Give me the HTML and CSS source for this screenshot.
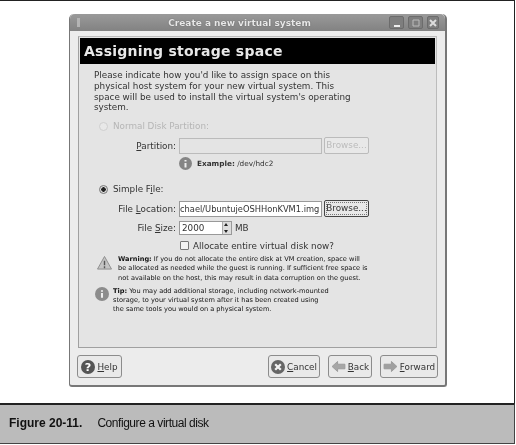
FILE: index.html
```html
<!DOCTYPE html>
<html lang="en">
<head>
    <meta charset="UTF-8">
    <meta name="viewport" content="width=device-width, initial-scale=1.0">
    <title>Create a new virtual system</title>
    <link rel="stylesheet" href="styles.css">
</head>
<body>

<div class="figure">
    <div class="window">
        <div class="titlebar">
            <span class="grip"></span>
            <span class="title">Create a new virtual system</span>
            <span class="wm-buttons">
                <span class="wm-btn"><svg width="10" height="10" viewBox="0 0 10 10"><path d="M2 8h6" stroke="#eee" stroke-width="2"/></svg></span>
                <span class="wm-btn"><svg width="10" height="10" viewBox="0 0 10 10"><path d="M2 2h6v6H2z" fill="none" stroke="#bbb" stroke-width="1"/></svg></span>
                <span class="wm-btn wm-close"><svg width="10" height="10" viewBox="0 0 10 10"><path d="M2 2l6 6M8 2l-6 6" stroke="#ddd" stroke-width="2"/></svg></span>
            </span>
        </div>

        <div class="client">
            <div class="page">
                <h1 class="banner">Assigning storage space</h1>

                <p class="intro">Please indicate how you'd like to assign space on this physical host system for your new virtual system. This space will be used to install the virtual system's operating system.</p>

                <!-- Normal Disk Partition -->
                <div class="radio-row disabled">
                    <span class="radio"></span>
                    <span>Normal Disk Partition:</span>
                </div>
                <div class="field-row partition-row">
                    <label class="field-label"><u>P</u>artition:</label>
                    <span class="input input-partition"></span>
                    <span class="btn-small disabled">Browse...</span>
                </div>
                <div class="example-row">
                    <svg width="13" height="13" viewBox="0 0 13 13"><circle cx="6.5" cy="6.5" r="6.5" fill="#858585"/><path d="M6.5 3v1.5M6.5 6v4.5" stroke="#eee" stroke-width="2"/></svg>
                    <span><b>Example:</b> /dev/hdc2</span>
                </div>

                <!-- Simple File -->
                <div class="radio-row simple-row">
                    <span class="radio checked"></span>
                    <span>Simple F<u>i</u>le:</span>
                </div>
                <div class="field-row location-row">
                    <label class="field-label">File <u>L</u>ocation:</label>
                    <span class="input input-location">chael/UbuntujeOSHHonKVM1.img</span>
                    <span class="btn-small focused">Browse...</span>
                </div>
                <div class="field-row size-row">
                    <label class="field-label">File <u>S</u>ize:</label>
                    <span class="input input-size">2000<span class="spin"><i class="up"></i><i class="down"></i></span></span>
                    <span>MB</span>
                </div>
                <div class="check-row">
                    <span class="checkbox"></span>
                    <span>Allocate entire virtual disk now?</span>
                </div>

                <div class="note warning">
                    <svg width="15" height="14" viewBox="0 0 16 15"><path d="M8 .5L15.5 14H.5z" fill="#c4c4c4" stroke="#8a8a8a"/><path d="M8 5v5M8 11v2" stroke="#555" stroke-width="1.5"/></svg>
                    <p><b>Warning:</b> If you do not allocate the entire disk at VM creation, space will<br>be allocated as needed while the guest is running. If sufficient free space is<br>not available on the host, this may result in data corruption on the guest.</p>
                </div>
                <div class="note tip">
                    <svg width="14" height="14" viewBox="0 0 15 15"><circle cx="7.5" cy="7.5" r="7.5" fill="#8c8c8c"/><path d="M7.5 3.5v1.5M7.5 6.5v5" stroke="#eee" stroke-width="2.2"/></svg>
                    <p><b>Tip:</b> You may add additional storage, including network-mounted<br>storage, to your virtual system after it has been created using<br>the same tools you would on a physical system.</p>
                </div>
            </div>

            <div class="actions">
                <span class="btn btn-help">
                    <svg width="14" height="14" viewBox="0 0 15 15"><circle cx="7.5" cy="7.5" r="7.5" fill="#555"/><text x="7.5" y="11.5" class="icon-glyph">?</text></svg>
                    <span><u>H</u>elp</span>
                </span>
                <span class="spacer"></span>
                <span class="btn btn-cancel">
                    <svg width="14" height="14" viewBox="0 0 15 15"><circle cx="7.5" cy="7.5" r="7.5" fill="#666"/><path d="M4.5 4.5l6 6M10.5 4.5l-6 6" stroke="#f4f4f4" stroke-width="2.4"/></svg>
                    <span><u>C</u>ancel</span>
                </span>
                <span class="btn btn-back">
                    <svg width="15" height="11" viewBox="0 0 16 12"><path d="M1 6l6-5.500v3h8v5H7v3z" fill="#a6a6a6" stroke="#999"/></svg>
                    <span><u>B</u>ack</span>
                </span>
                <span class="btn btn-forward">
                    <svg width="15" height="11" viewBox="0 0 16 12"><path d="M15 6L9 .5v3H1v5h8v3z" fill="#a0a0a0" stroke="#999"/></svg>
                    <span><u>F</u>orward</span>
                </span>
            </div>
        </div>
    </div>
</div>

<div class="caption">
    <b>Figure 20-11.</b>
    <span>Configure a virtual disk</span>
</div>

</body>
</html>
```

FILE: styles.css
```css
body {
    margin: 0;
    width: 516px;
    height: 445px;
    overflow: hidden;
    background-color: #fff;
    font-family: "DejaVu Sans", sans-serif;
    font-size: 8.8px;
    color: #333;
}
p {
    margin: 0;
}

/* white area of the book figure */
.figure {
    width: 515px;
    height: 403px;
    box-sizing: border-box;
    padding: 13px 0 0 69px;
    border-top: 1px solid #222;
    border-right: 1px solid #222;
}
.window {
    width: 378px;
    height: 373px;
    box-sizing: border-box;
    background-color: #ececec;
    border: 1px solid #777;
    border-top: 0;
    border-right-width: 2px;
    border-bottom-width: 2px;
    border-radius: 5px 5px 3px 3px;
    display: flex;
    flex-direction: column;
    filter: blur(0.3px);
}

/* title bar */
.titlebar {
    height: 17px;
    flex: none;
    display: flex;
    align-items: center;
    background: linear-gradient(#9a9a9a, #828282);
    border-radius: 5px 5px 0 0;
}
.grip {
    width: 3px;
    height: 9px;
    margin-left: 7px;
    background-color: #b4b4b4;
}
.title {
    flex: 1;
    text-align: center;
    padding-left: 10px;
    color: #e8e8e8;
    font-size: 9px;
    font-weight: bold;
    text-shadow: 0 0 1px #444;
}
.wm-buttons {
    display: flex;
    gap: 4px;
    margin-right: 6px;
}
.wm-btn {
    width: 15px;
    height: 13px;
    box-sizing: border-box;
    border: 1px solid #6c6c6c;
    border-radius: 2px;
    background-color: #7e7e7e;
    display: flex;
    align-items: center;
    justify-content: center;
}
.wm-close {
    width: 12px;
}

.client {
    flex: 1;
    display: flex;
    flex-direction: column;
    min-height: 0;
    padding: 5px 8px 0 8px;
}
.page {
    flex: 1;
    min-height: 0;
    padding: 1px 1px 0 1px;
    background-color: #e4e4e4;
    border: 1px solid #bcbcbc;
    border-bottom-color: #a0a0a0;
    border-left-color: #a0a0a0;
}

.banner {
    margin: 0;
    height: 26px;
    background-color: #000;
    color: #e8e8e8;
    font-size: 14px;
    font-weight: bold;
    line-height: 26px;
    letter-spacing: 0.25px;
    padding-left: 4px;
}
.intro {
    margin: 6px 0 0 14px;
    width: 262px;
    line-height: 10.8px;
}

/* radios and form rows */
.radio-row {
    display: flex;
    align-items: center;
    gap: 5px;
    margin: 6px 0 0 19px;
    height: 14px;
}
.radio-row.disabled {
    color: #b5b5b5;
}
.radio {
    width: 9px;
    height: 9px;
    box-sizing: border-box;
    border: 1px solid #777;
    border-radius: 50%;
    background-color: #e8e8e8;
}
.disabled .radio {
    border-color: #cfcfcf;
}
.radio.checked {
    background: radial-gradient(circle, #222 0 2px, #ddd 2.5px);
}
.simple-row {
    margin-top: 12px;
}
.field-row {
    display: flex;
    align-items: center;
    height: 17px;
}
.field-label {
    width: 96px;
    margin-right: 3px;
    text-align: right;
}
.partition-row {
    margin-top: 4px;
}
.location-row {
    margin-top: 4px;
}
.size-row {
    margin-top: 2px;
}
.input {
    height: 16px;
    box-sizing: border-box;
    border: 1px solid #999;
    display: flex;
    align-items: center;
    background-color: #fff;
    white-space: nowrap;
    overflow: hidden;
}
.input-partition {
    width: 143px;
    background-color: #e4e4e4;
    border-color: #bbb;
}
.input-location {
    width: 143px;
    font-size: 8.3px;
}
.input-size {
    width: 53px;
    height: 14px;
    padding-left: 2px;
    margin-right: 3px;
    position: relative;
}
.spin {
    position: absolute;
    right: 0;
    top: 0;
    bottom: 0;
    width: 8px;
    background-color: #ddd;
    border-left: 1px solid #aaa;
}
.spin i {
    position: absolute;
    left: 1px;
    border-left: 2.5px solid transparent;
    border-right: 2.5px solid transparent;
}
.spin .up {
    top: 1px;
    border-bottom: 3px solid #222;
}
.spin .down {
    bottom: 1px;
    border-top: 3px solid #222;
}
.btn-small {
    width: 45px;
    height: 17px;
    box-sizing: border-box;
    margin-left: 2px;
    border: 1px solid #888;
    border-radius: 2px;
    text-align: center;
    line-height: 15px;
    background-color: #e8e8e8;
}
.btn-small.disabled {
    color: #bbb;
    border-color: #bbb;
}
.btn-small.focused {
    border-color: #444;
    outline: 1px dotted #777;
    outline-offset: -3px;
}
.example-row {
    display: flex;
    align-items: center;
    gap: 5px;
    margin: 2px 0 0 99px;
    font-size: 7.3px;
    height: 14px;
}
.check-row {
    display: flex;
    align-items: center;
    gap: 4px;
    margin: 3px 0 0 100px;
    height: 13px;
}
.checkbox {
    width: 9px;
    height: 9px;
    box-sizing: border-box;
    border: 1px solid #777;
    background-color: #f2f2f2;
    border-radius: 1px;
}

/* warning and tip notes */
.note {
    display: flex;
    font-size: 6.6px;
    line-height: 9.3px;
    color: #111;
}
.note p {
    white-space: nowrap;
}
.warning {
    margin: 3px 0 0 17px;
    gap: 6px;
}
.warning svg {
    margin-top: 1px;
}
.tip {
    margin: 3.5px 0 0 15px;
    gap: 4px;
}

/* bottom buttons */
.actions {
    display: flex;
    align-items: center;
    gap: 8px;
    flex: none;
    height: 37px;
    margin: 0 -1px;
}
.spacer {
    flex: 1;
}
.btn {
    height: 23px;
    box-sizing: border-box;
    border: 1px solid #8c8c8c;
    border-radius: 3px;
    background-color: #e9e9e9;
    display: flex;
    align-items: center;
    justify-content: center;
    gap: 2px;
}
.btn-help {
    width: 45px;
}
.btn-cancel {
    width: 52px;
}
.btn-back {
    width: 44px;
}
.btn-forward {
    width: 58px;
}
.icon-glyph {
    fill: #fff;
    font-size: 12px;
    font-weight: bold;
    text-anchor: middle;
}

/* figure caption */
.caption {
    width: 515px;
    height: 41px;
    box-sizing: border-box;
    display: flex;
    align-items: center;
    gap: 15px;
    padding: 0 0 3px 9px;
    background-color: #bbb;
    border-top: 2px solid #222;
    border-bottom: 1px solid #444;
    border-right: 1px solid #444;
    font-family: "Liberation Sans", sans-serif;
    font-size: 12px;
    color: #111;
    filter: blur(0.3px);
}
.caption span {
    letter-spacing: -0.45px;
}
```
